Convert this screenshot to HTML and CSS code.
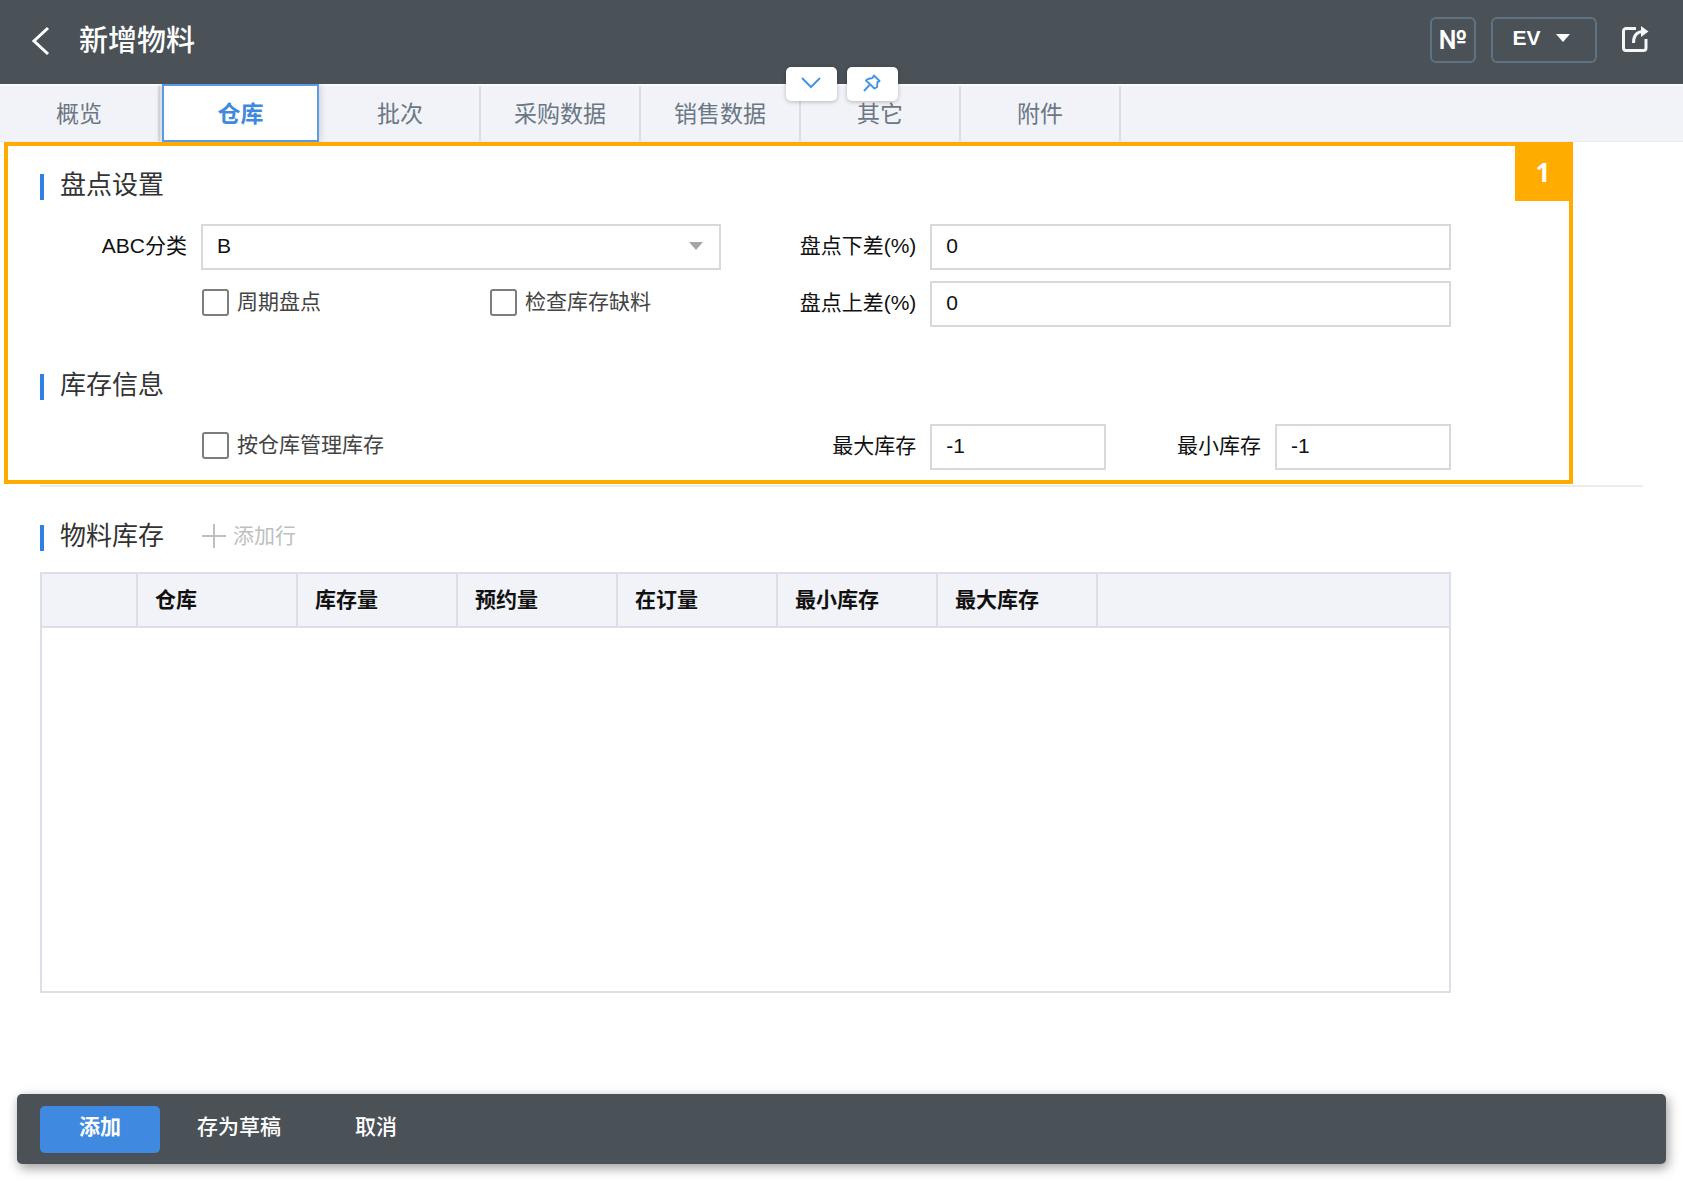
FILE: index.html
```html
<!DOCTYPE html>
<html lang="zh-CN">
<head>
    <meta charset="UTF-8">
    <meta name="viewport" content="width=device-width, initial-scale=1.0">
    <title>新增物料</title>
    <link rel="stylesheet" href="styles.css">
</head>
<body>

    <header class="topbar">
        <button class="icon-btn" type="button" aria-label="返回">
            <svg width="22" height="32" viewBox="0 0 22 32" fill="none" stroke="#fff" stroke-width="3">
                <path d="M19 4L5 17l14 13"/>
            </svg>
        </button>
        <h1>新增物料</h1>
        <div class="topbar-actions">
            <button class="outline-btn number-btn" type="button">№</button>
            <button class="outline-btn user-btn" type="button">EV
                <svg width="14" height="8" viewBox="0 0 14 8"><path d="M0 0h14L7 8z" fill="#fff"/></svg>
            </button>
            <button class="icon-btn" type="button" aria-label="打开">
                <svg width="28" height="28" viewBox="0 0 28 28" fill="none" stroke="#f4f5f6" stroke-width="3">
                    <path d="M15 2.500H5a2.500 2.500 0 0 0-2.500 2.500v17A2.500 2.500 0 0 0 5 24.500h17.500a2.500 2.500 0 0 0 2.500-2.500V13"/>
                    <path d="M12.500 17c0-7 3-11 9-11.500"/>
                    <path d="M20 0l7.500 5.500L20 11z" fill="#f4f5f6" stroke="none"/>
                </svg>
            </button>
        </div>

        <!-- Collapse / pin handles -->
        <div class="handles">
            <button type="button" aria-label="展开">
                <svg width="20" height="12" viewBox="0 0 20 12" fill="none" stroke="#4a94e8" stroke-width="2">
                    <path d="M1 1l9 9 9-9"/>
                </svg>
            </button>
            <button type="button" aria-label="固定">
                <svg width="18" height="18" viewBox="0 0 18 18" fill="none" stroke="#4a94e8" stroke-width="2" stroke-linejoin="round">
                    <path d="M11 1.500L16.500 7l-2 1-.5 5-2.500 1.500L3 6.500 5 5l4.500-1z"/>
                    <path d="M6.500 11L1 17"/>
                </svg>
            </button>
        </div>
    </header>

    <nav class="tabs">
        <a href="#">概览</a>
        <a href="#" class="active">仓库</a>
        <a href="#">批次</a>
        <a href="#">采购数据</a>
        <a href="#">销售数据</a>
        <a href="#">其它</a>
        <a href="#">附件</a>
    </nav>

    <main>
        <div class="settings">
            <section>
                <h2>盘点设置</h2>
                <div class="form-grid">
                    <label for="abc">ABC分类</label>
                    <div class="select-box">
                        <select id="abc">
                            <option>A</option>
                            <option selected>B</option>
                            <option>C</option>
                        </select>
                        <svg width="14" height="8" viewBox="0 0 14 8"><path d="M0 0h14L7 8z" fill="#a6a6a6"/></svg>
                    </div>
                    <label for="lower">盘点下差(%)</label>
                    <input type="text" id="lower" value="0">

                    <div class="checks">
                        <label class="check"><input type="checkbox">周期盘点</label>
                        <label class="check"><input type="checkbox">检查库存缺料</label>
                    </div>
                    <label for="upper">盘点上差(%)</label>
                    <input type="text" id="upper" value="0">
                </div>
            </section>

            <section>
                <h2>库存信息</h2>
                <div class="form-grid">
                    <div class="checks">
                        <label class="check"><input type="checkbox">按仓库管理库存</label>
                    </div>
                    <label for="max">最大库存</label>
                    <div class="stock-range">
                        <input type="text" id="max" value="-1">
                        <label for="min">最小库存</label>
                        <input type="text" id="min" value="-1">
                    </div>
                </div>
            </section>

            <div class="callout"><span>1</span></div>
        </div>

        <section class="stock">
            <div class="stock-head">
                <h2>物料库存</h2>
                <button class="add-row" type="button" disabled>
                    <svg width="24" height="24" viewBox="0 0 24 24" stroke="#bfbfbf" stroke-width="2"><path d="M12 0v24M0 12h24"/></svg>
                    添加行
                </button>
            </div>
            <div class="table-box">
                <table>
                    <thead>
                        <tr>
                            <th class="col-index"></th>
                            <th>仓库</th>
                            <th>库存量</th>
                            <th>预约量</th>
                            <th>在订量</th>
                            <th>最小库存</th>
                            <th>最大库存</th>
                            <th class="col-rest"></th>
                        </tr>
                    </thead>
                    <tbody></tbody>
                </table>
            </div>
        </section>
    </main>

    <footer>
        <button class="primary" type="button">添加</button>
        <button type="button">存为草稿</button>
        <button type="button">取消</button>
    </footer>

</body>
</html>
```
FILE: styles.css
```css
* {
    margin: 0;
    padding: 0;
    box-sizing: border-box;
}

body {
    font-family: "Liberation Sans", "Noto Sans CJK SC", sans-serif;
    font-size: 21px;
    line-height: 30px;
    color: #111;
    background-color: #fff;
    min-height: 100vh;
    display: flex;
    flex-direction: column;
}

button, input, select {
    font: inherit;
    color: inherit;
}

button {
    background: none;
    border: none;
    cursor: pointer;
}

svg {
    display: block;
}

/* Top bar */
.topbar {
    position: relative;
    display: flex;
    align-items: center;
    height: 84px;
    padding: 0 34px 4px 29px;
    background-color: #4a5157;
    color: #fff;
}

.topbar h1 {
    margin-left: 28px;
    padding-top: 2px;
    font-size: 29px;
    font-weight: 500;
    line-height: 40px;
}

.topbar-actions {
    display: flex;
    align-items: center;
    gap: 15px;
    margin-left: auto;
}

.topbar-actions .icon-btn {
    margin-left: 9px;
}

.outline-btn {
    display: flex;
    align-items: center;
    justify-content: center;
    height: 46px;
    border: 2px solid #5f7385;
    border-radius: 6px;
    font-weight: bold;
}

.number-btn {
    width: 46px;
    font-family: Inter, sans-serif;
    font-size: 26px;
}

.user-btn {
    width: 106px;
    gap: 15px;
    padding: 0 6px 4px 0;
}

.handles {
    position: absolute;
    z-index: 2;
    bottom: -17px;
    left: 50%;
    display: flex;
    gap: 10px;
    transform: translateX(-50%);
}

.handles button {
    display: flex;
    align-items: center;
    justify-content: center;
    width: 51px;
    height: 34px;
    padding-bottom: 3px;
    border-radius: 5px;
    background-color: #fff;
    box-shadow: 0 1px 4px rgba(0, 0, 0, 0.25);
}

/* Tabs */
.tabs {
    display: flex;
    height: 58px;
    background-color: #f2f3f8;
    border-top: 2px solid #fafafc;
    border-bottom: 1px solid #e9eaee;
}

.tabs a {
    width: 160px;
    padding-top: 13px;
    border-right: 2px solid #dcdde7;
    color: #6b7785;
    font-size: 23px;
    text-align: center;
    text-decoration: none;
}

.tabs .active {
    margin: -2px 2px -1px;
    width: 157px;
    border: 2px solid #5a9ae6;
    background-color: #fff;
    box-shadow: 0 0 8px rgba(0, 0, 0, 0.2);
    color: #3f8ae0;
    font-weight: bold;
    clip-path: inset(0 -10px);
}

/* Content */
main {
    flex: 1;
    display: flex;
    flex-direction: column;
    padding: 0 40px 101px;
}

h2 {
    position: relative;
    padding-left: 20px;
    color: #333;
    font-size: 26px;
    font-weight: 400;
    line-height: 36px;
}

h2::before {
    content: "";
    position: absolute;
    left: 0;
    top: 7px;
    width: 4px;
    height: 26px;
    background-color: #2f80e0;
}

.settings {
    position: relative;
    padding-bottom: 15px;
    border-bottom: 2px solid #ececec;
}

.settings section {
    padding-top: 25px;
}

.settings section + section {
    padding-top: 40px;
}

.form-grid {
    display: grid;
    grid-template-columns: 147px 1fr 181px 1fr;
    gap: 11px 14px;
    width: 88%;
    margin-top: 21px;
}

.form-grid label {
    padding-top: 7px;
    text-align: right;
    white-space: nowrap;
}

.form-grid input[type="text"],
.select-box select {
    width: 100%;
    min-width: 0;
    height: 46px;
    padding: 0 14px 2px;
    border: 2px solid #d9d9d9;
    background-color: #fff;
}

.select-box {
    position: relative;
}

.select-box select {
    appearance: none;
}

.select-box svg {
    position: absolute;
    right: 18px;
    top: 18px;
}

.checks {
    grid-column: 2;
    display: grid;
    grid-template-columns: 288px 1fr;
}

.form-grid .check {
    display: flex;
    align-items: center;
    gap: 8px;
    height: 42px;
    padding: 0;
    color: #444;
}

.check input {
    appearance: none;
    width: 27px;
    height: 27px;
    margin-left: 1px;
    border: 2px solid #7d7d7d;
    border-radius: 3px;
}

.stock-range {
    display: grid;
    grid-template-columns: 1fr 141px 1fr;
    gap: 14px;
}

/* Highlighted area with its number */
.callout {
    position: absolute;
    top: 0;
    left: -36px;
    right: 70px;
    bottom: 1px;
    border: 4px solid #ffab00;
    pointer-events: none;
}

.callout span {
    position: absolute;
    top: -4px;
    right: -4px;
    width: 58px;
    height: 59px;
    padding-right: 2px;
    background-color: #ffab00;
    color: #fff;
    font-family: "Open Sans", sans-serif;
    font-size: 26px;
    font-weight: bold;
    line-height: 60px;
    text-align: center;
}

/* Stock table */
.stock {
    flex: 1;
    display: flex;
    flex-direction: column;
    width: 88%;
    padding-top: 31px;
}

.stock-head {
    display: flex;
    align-items: center;
    gap: 38px;
    margin-bottom: 18px;
}

.add-row {
    display: flex;
    align-items: center;
    gap: 7px;
    color: #bfbfbf;
}

.table-box {
    flex: 1;
    min-height: 200px;
    border: 2px solid #dcdee8;
}

table {
    width: 100%;
    border-collapse: collapse;
    table-layout: fixed;
}

th {
    width: 160px;
    height: 53px;
    padding: 0 17px;
    border-right: 2px solid #dcdee8;
    border-bottom: 2px solid #dcdee8;
    background-color: #f2f3f8;
    text-align: left;
}

.col-index {
    width: 95px;
}

.col-rest {
    width: auto;
    border-right: none;
}

/* Action bar */
footer {
    display: flex;
    align-items: center;
    margin: 0 17px 17px;
    padding: 12px 23px 11px;
    border-radius: 5px;
    background-color: #4a5157;
    box-shadow: 2px 4px 12px rgba(0, 0, 0, 0.4);
}

footer button {
    height: 47px;
    padding: 0 37px 6px;
    color: #fff;
    font-weight: 500;
}

footer .primary {
    width: 120px;
    border-radius: 5px;
    background-color: #3f8ae0;
    font-weight: bold;
}
```
